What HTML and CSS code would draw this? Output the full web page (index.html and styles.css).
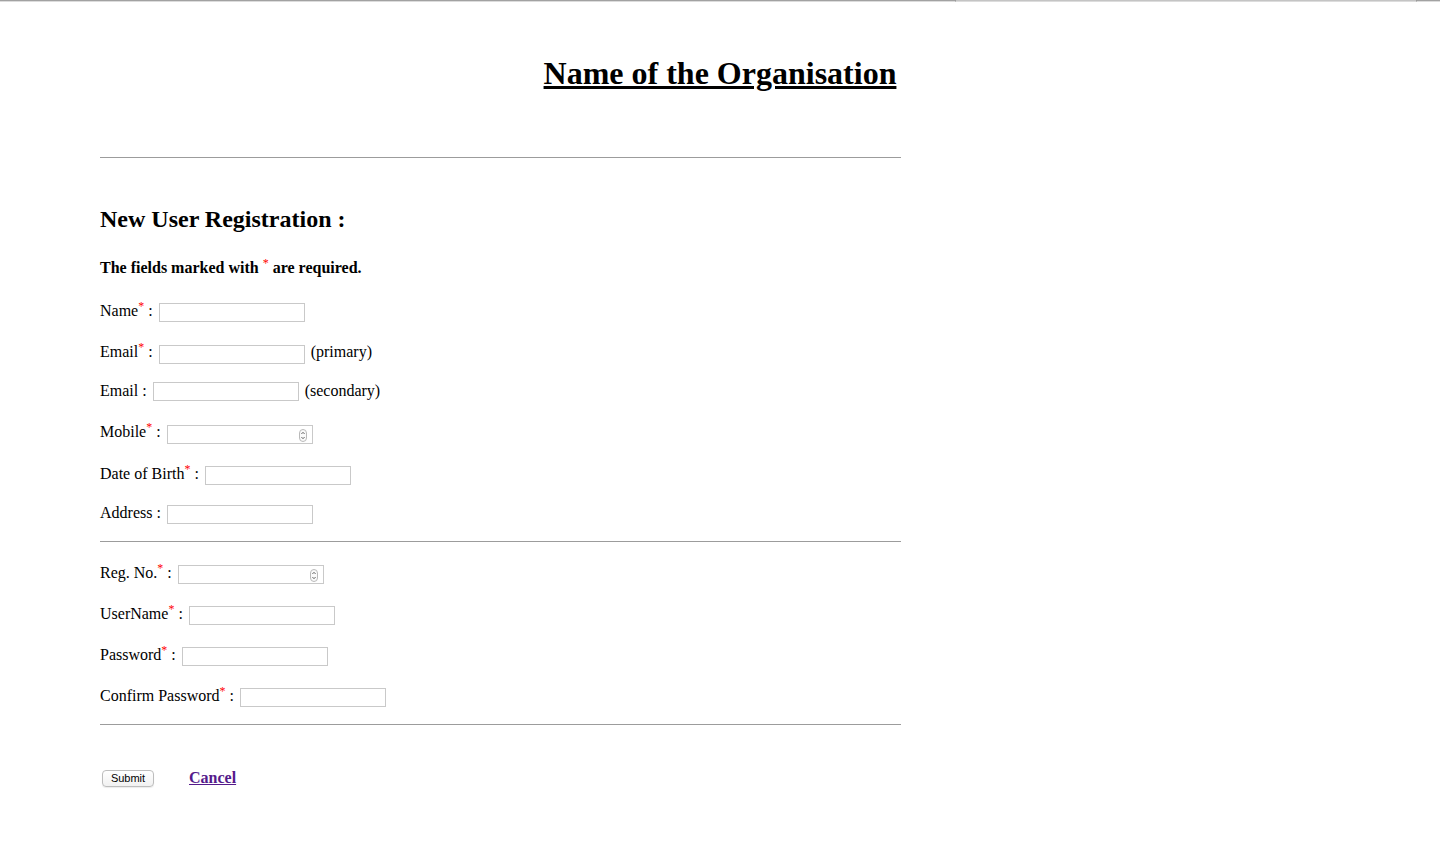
FILE: index.html
```html
<!DOCTYPE html>
<html lang="en">
<head>
<meta charset="utf-8">
<title>New User Registration</title>
<link rel="stylesheet" href="styles.css">
</head>
<body>
<div class="topbar">
  <span class="seg seg-a"></span>
  <span class="seg seg-b"></span>
  <span class="seg seg-c"></span>
</div>
<h1 class="title">Name of the Organisation</h1>
<form class="content" action="#">
  <hr class="rule rule-top">
  <h2 class="heading">New User Registration :</h2>
  <p class="note">The fields marked with <sup class="req">*</sup> are required.</p>

  <p class="field">Name<sup class="req">*</sup> : <input class="box" type="text" name="name"></p>
  <p class="field">Email<sup class="req">*</sup> : <input class="box" type="text" name="email1"> (primary)</p>
  <p class="field field-loose">Email : <input class="box" type="text" name="email2"> (secondary)</p>
  <p class="field">Mobile<sup class="req">*</sup> : <span class="num"><input class="box" type="text" inputmode="numeric" name="mobile"><svg class="spin" viewBox="0 0 8 13" width="8" height="13"><rect x="0.5" y="0.5" width="7" height="12" rx="3.5" fill="#fafafa" stroke="#b9b9b9"/><path d="M2.4 5 L4 3.3 L5.6 5" fill="none" stroke="#555" stroke-width="0.9"/><path d="M2.4 8 L4 9.7 L5.6 8" fill="none" stroke="#555" stroke-width="0.9"/></svg></span></p>
  <p class="field field-loose">Date of Birth<sup class="req">*</sup> : <input class="box" type="text" name="dob"></p>
  <p class="field field-end">Address : <input class="box" type="text" name="address"></p>

  <hr class="rule rule-mid">

  <p class="field">Reg. No.<sup class="req">*</sup> : <span class="num"><input class="box" type="text" inputmode="numeric" name="regno"><svg class="spin" viewBox="0 0 8 13" width="8" height="13"><rect x="0.5" y="0.5" width="7" height="12" rx="3.5" fill="#fafafa" stroke="#b9b9b9"/><path d="M2.4 5 L4 3.3 L5.6 5" fill="none" stroke="#555" stroke-width="0.9"/><path d="M2.4 8 L4 9.7 L5.6 8" fill="none" stroke="#555" stroke-width="0.9"/></svg></span></p>
  <p class="field">UserName<sup class="req">*</sup> : <input class="box" type="text" name="username"></p>
  <p class="field">Password<sup class="req">*</sup> : <input class="box" type="password" name="password"></p>
  <p class="field field-end">Confirm Password<sup class="req">*</sup> : <input class="box" type="password" name="confirm"></p>

  <hr class="rule rule-end">

  <p class="actions"><button class="submit" type="submit">Submit</button><a class="cancel" href="#">Cancel</a></p>
</form>
</body>
</html>
```
FILE: styles.css
```css
html, body {
  margin: 0;
  padding: 0;
  background: #ffffff;
}

body {
  font-family: "Liberation Serif", "Times New Roman", serif;
  font-size: 16px;
  color: #000000;
}

.topbar {
  display: flex;
  height: 2px;
}

.seg {
  display: block;
  height: 1px;
  border-bottom: 1px solid #dcdcdc;
}

.seg-a {
  width: 955px;
  background: #a2a2a2;
}

.seg-b {
  width: 460px;
  background: #c4c4c4;
  border-left: 1px solid #9a9a9a;
}

.seg-c {
  flex: 1;
  background: #a2a2a2;
  border-left: 1px solid #9a9a9a;
}

.title {
  margin: 53px 0 0;
  font-size: 32px;
  font-weight: bold;
  text-align: center;
  text-decoration: underline;
  line-height: normal;
}

.content {
  margin: 0;
  padding: 0 0 40px 100px;
  width: 801px;
}

.rule {
  height: 0;
  margin: 0;
  border: 0;
  border-top: 1px solid #9c9c9c;
}

.rule-top {
  margin-top: 65px;
}

.rule-mid {
  margin-bottom: 19px;
}

.heading {
  margin: 48px 0 0;
  font-size: 24px;
  font-weight: bold;
  line-height: normal;
}

.note {
  margin: 23px 0 22px;
  font-size: 16px;
  font-weight: bold;
}

.req {
  color: #ff0000;
  font-size: 12px;
  font-weight: normal;
}

.field {
  margin: 0 0 18px;
}

.field-loose {
  margin-bottom: 19px;
}

.field-end {
  margin-bottom: 17px;
}

.box {
  box-sizing: border-box;
  width: 146px;
  height: 19px;
  margin: 0 2px 0 2px;
  padding: 1px 3px;
  border: 1px solid #c9c9c9;
  background: #ffffff;
  font-family: "Liberation Sans", Arial, sans-serif;
  font-size: 13px;
  vertical-align: middle;
  outline: none;
}

.num {
  position: relative;
  display: inline-block;
  vertical-align: middle;
  line-height: 0;
}

.num .box {
  display: block;
}

.spin {
  position: absolute;
  right: 8px;
  top: 4px;
}

.actions {
  margin: 43px 0 0;
}

.submit {
  box-sizing: border-box;
  height: 17px;
  width: 52px;
  margin: 0 0 0 2px;
  padding: 0;
  border: 1px solid #bdbdbd;
  border-radius: 4px;
  background: linear-gradient(#ffffff, #f1f1f1);
  box-shadow: 0 1px 1px rgba(0, 0, 0, 0.08);
  font-family: "Liberation Sans", Arial, sans-serif;
  font-size: 11px;
  color: #000000;
}

.cancel {
  margin-left: 35px;
  color: #551a8b;
  font-weight: bold;
  text-decoration: underline;
  vertical-align: -1px;
}
```
